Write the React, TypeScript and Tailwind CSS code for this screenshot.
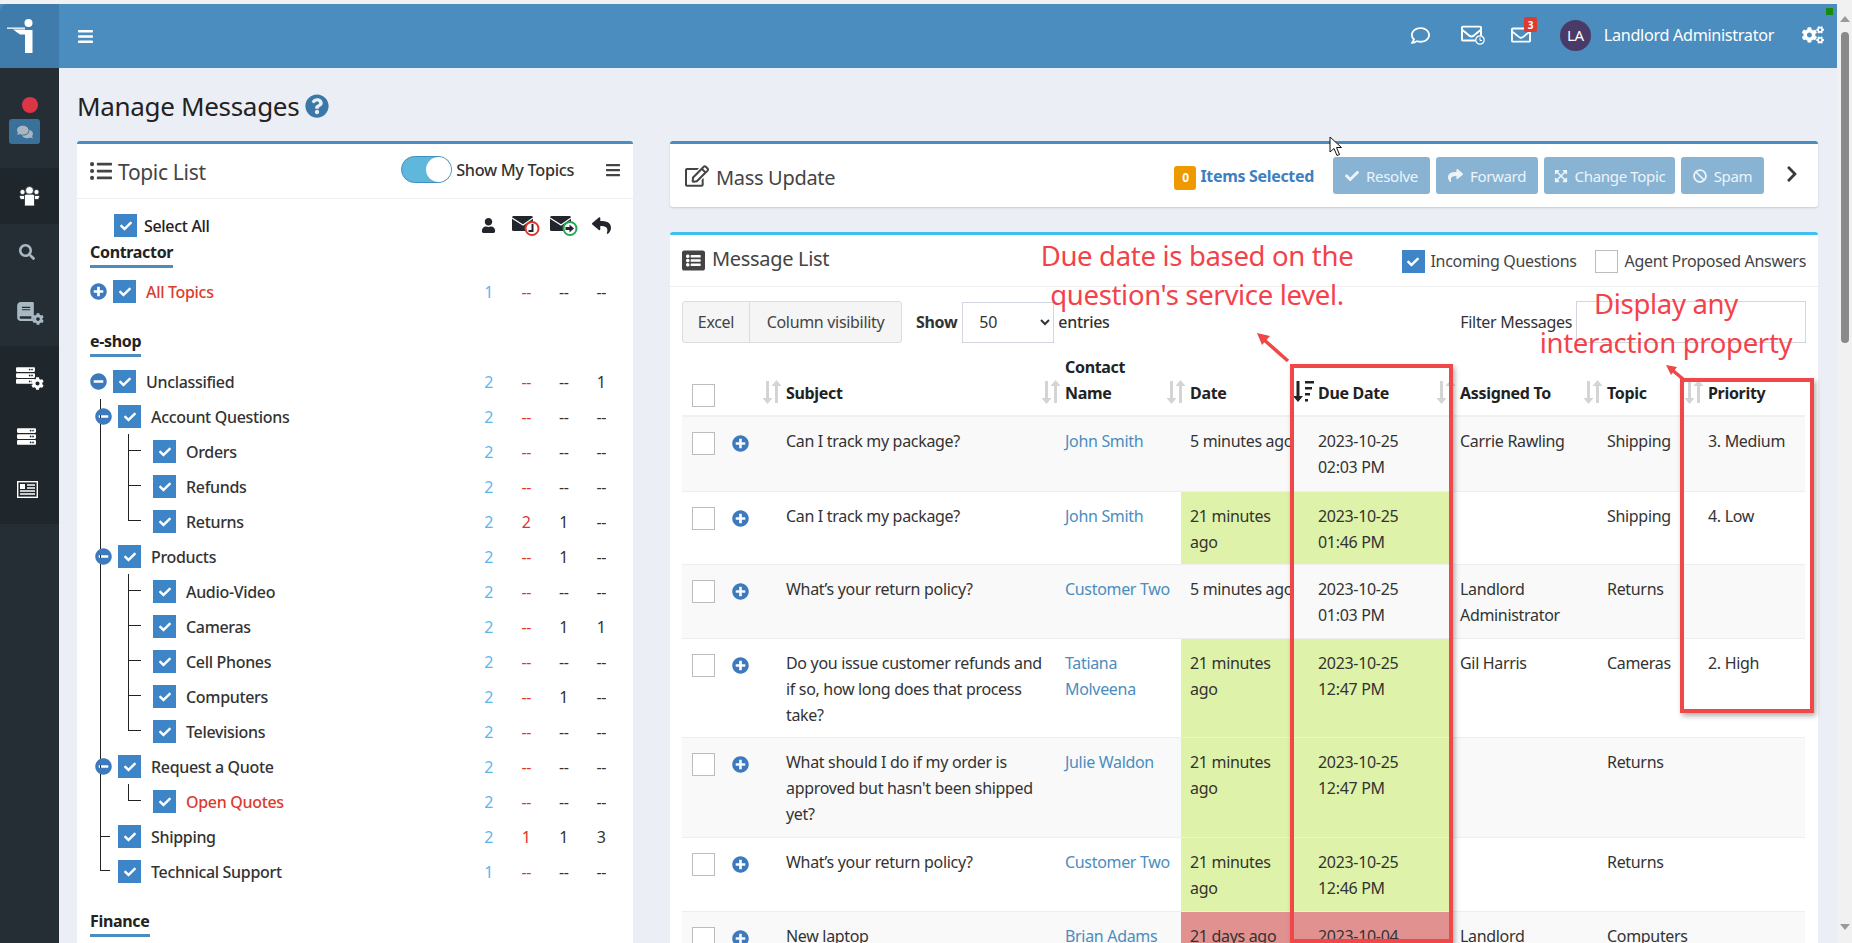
import {
  FaBan, FaBars, FaBook, FaCheck, FaChevronRight, FaCog, FaCogs, FaComments, FaExpandArrowsAlt,
  FaListAlt, FaListUl, FaMinusCircle, FaPlusCircle, FaQuestionCircle, FaRegComment, FaRegEdit,
  FaRegEnvelope, FaReply, FaSearch, FaServer, FaShare, FaUser,
} from "react-icons/fa"

type Num = string
type TreeRow = { label: string; pad: string; icon?: "plus" | "minus"; red?: boolean; nums: Num[] }

const treeRows: TreeRow[] = [
  { label: "Unclassified", pad: "pl-0", icon: "minus", nums: ["2", "--", "--", "1"] },
  { label: "Account Questions", pad: "pl-[5px]", icon: "minus", nums: ["2", "--", "--", "--"] },
  { label: "Orders", pad: "pl-[63px]", nums: ["2", "--", "--", "--"] },
  { label: "Refunds", pad: "pl-[63px]", nums: ["2", "--", "--", "--"] },
  { label: "Returns", pad: "pl-[63px]", nums: ["2", "2", "1", "--"] },
  { label: "Products", pad: "pl-[5px]", icon: "minus", nums: ["2", "--", "1", "--"] },
  { label: "Audio-Video", pad: "pl-[63px]", nums: ["2", "--", "--", "--"] },
  { label: "Cameras", pad: "pl-[63px]", nums: ["2", "--", "1", "1"] },
  { label: "Cell Phones", pad: "pl-[63px]", nums: ["2", "--", "--", "--"] },
  { label: "Computers", pad: "pl-[63px]", nums: ["2", "--", "1", "--"] },
  { label: "Televisions", pad: "pl-[63px]", nums: ["2", "--", "--", "--"] },
  { label: "Request a Quote", pad: "pl-[5px]", icon: "minus", nums: ["2", "--", "--", "--"] },
  { label: "Open Quotes", pad: "pl-[63px]", red: true, nums: ["2", "--", "--", "--"] },
  { label: "Shipping", pad: "pl-[28px]", nums: ["2", "1", "1", "3"] },
  { label: "Technical Support", pad: "pl-[28px]", nums: ["1", "--", "--", "--"] },
]

// tree connector lines: [left, top, width, height]
const treeLines = [
  [10, 35, 1, 471], [10, 472, 10, 1], [10, 506, 10, 1],
  [38, 70, 1, 86], [38, 86, 13, 1], [38, 121, 13, 1], [38, 156, 13, 1],
  [38, 210, 1, 156], [38, 226, 13, 1], [38, 261, 13, 1], [38, 296, 13, 1], [38, 331, 13, 1], [38, 366, 13, 1],
  [38, 420, 1, 16], [38, 436, 13, 1],
]

type Msg = {
  subject: string[]
  contact: string[]
  date: string[]
  due: string[]
  assigned?: string[]
  topic: string
  priority?: string
  tone?: "green" | "red"
  h: string
}

const messages: Msg[] = [
  { subject: ["Can I track my package?"], contact: ["John Smith"], date: ["5 minutes ago"], due: ["2023-10-25", "02:03 PM"], assigned: ["Carrie Rawling"], topic: "Shipping", priority: "3. Medium", h: "h-[75px]" },
  { subject: ["Can I track my package?"], contact: ["John Smith"], date: ["21 minutes", "ago"], due: ["2023-10-25", "01:46 PM"], topic: "Shipping", priority: "4. Low", tone: "green", h: "h-[73px]" },
  { subject: ["What’s your return policy?"], contact: ["Customer Two"], date: ["5 minutes ago"], due: ["2023-10-25", "01:03 PM"], assigned: ["Landlord", "Administrator"], topic: "Returns", h: "h-[74px]" },
  { subject: ["Do you issue customer refunds and", "if so, how long does that process", "take?"], contact: ["Tatiana", "Molveena"], date: ["21 minutes", "ago"], due: ["2023-10-25", "12:47 PM"], assigned: ["Gil Harris"], topic: "Cameras", priority: "2. High", tone: "green", h: "h-[99px]" },
  { subject: ["What should I do if my order is", "approved but hasn't been shipped", "yet?"], contact: ["Julie Waldon"], date: ["21 minutes", "ago"], due: ["2023-10-25", "12:47 PM"], topic: "Returns", tone: "green", h: "h-[100px]" },
  { subject: ["What’s your return policy?"], contact: ["Customer Two"], date: ["21 minutes", "ago"], due: ["2023-10-25", "12:46 PM"], topic: "Returns", tone: "green", h: "h-[74px]" },
  { subject: ["New laptop"], contact: ["Brian Adams"], date: ["21 days ago"], due: ["2023-10-04", "10:12 AM"], assigned: ["Landlord", "Administrator"], topic: "Computers", tone: "red", h: "h-[74px]" },
]

function Box({ checked }: { checked?: boolean }) {
  if (checked) {
    return (
      <span className="flex h-[23px] w-[23px] shrink-0 items-center justify-center bg-[#3d85c6]">
        <FaCheck className="text-white" size={12} />
      </span>
    )
  }
  return <span className="block h-[23px] w-[23px] shrink-0 border border-[#bcbcbc] bg-white" />
}

function Lines({ lines }: { lines: string[] }) {
  return (
    <>
      {lines.map((l) => (
        <div key={l} className="whitespace-nowrap">{l}</div>
      ))}
    </>
  )
}

function SortIcon() {
  return (
    <svg width="20" height="24" viewBox="0 0 20 24" className="text-[#d4d4d4]" fill="currentColor">
      <path d="M4 1h3v17h3.500L5.500 24 .5 18H4z" />
      <path d="M13 23h3V6h3.500L14.500 0 9.500 6H13z" />
    </svg>
  )
}

function Th({ children, sort, sortDark }: { children?: React.ReactNode; sort?: boolean; sortDark?: boolean }) {
  return (
    <th className="relative pb-[9px] pl-[9px] text-left align-bottom font-bold leading-[26px] text-[#222]">
      {sort && (
        <span className="absolute bottom-[11px] left-[-15px]">
          <SortIcon />
        </span>
      )}
      {sortDark && (
        <span className="absolute bottom-[13px] left-[-16px]">
          <svg width="22" height="22" viewBox="0 0 22 22" className="text-[#222]" fill="currentColor">
            <path d="M3.500 1h3v15H10l-5 6-5-6h3.500z" />
            <path d="M12 1h9v2.500h-9zM12 7h7v2.500h-7zM12 13h5v2.500h-5zM12 19h3v2.500h-3z" />
          </svg>
        </span>
      )}
      {children}
    </th>
  )
}

function Logo() {
  return (
    <svg width="59" height="63" viewBox="0 0 59 63" fill="white">
      <circle cx="28.500" cy="18" r="4" />
      <path d="M25 25h7.500v23H25z" />
      <path d="M7 22.500h18v1.300H7z" />
      <path d="M13 24.500h12v5h-5z" />
    </svg>
  )
}

function UsersIcon() {
  return (
    <svg width="21" height="20" viewBox="0 0 21 20" fill="white" stroke="#1f272d" strokeWidth=".8">
      <circle cx="3.500" cy="6" r="2.600" />
      <circle cx="17.500" cy="6" r="2.600" />
      <path d="M0 9.500h7v4H1.500z" />
      <path d="M14 9.500h7l-1.500 4H14z" />
      <circle cx="10.500" cy="4.500" r="4" />
      <path d="M5.500 10c0-1 1-1.800 2-1.800h6c1 0 2 .8 2 1.800v9c0 .5-.4 1-1 1h-8c-.6 0-1-.5-1-1z" />
    </svg>
  )
}

function TopicRow({ row }: { row: TreeRow }) {
  return (
    <div className="flex h-[35px] items-center">
      <div className={`relative z-10 flex flex-1 items-center ${row.pad}`}>
        {row.icon === "plus" && <FaPlusCircle className="mr-[6px] text-[#3d79bd]" size={17} />}
        {row.icon === "minus" && <FaMinusCircle className="mr-[6px] text-[#3d79bd]" size={17} />}
        <Box checked />
        <span className={`ml-[10px] font-medium ${row.red ? "text-[#dc3b2f]" : "text-[#333]"}`}>{row.label}</span>
      </div>
      <Nums values={row.nums} />
    </div>
  )
}

function Nums({ values }: { values: Num[] }) {
  return (
    <div className="flex pr-[13px]">
      <span className="w-[37.500px] text-center text-[#5cb6ea]">{values[0]}</span>
      <span className="w-[37.500px] text-center text-[#e0342b]">{values[1]}</span>
      <span className="w-[37.500px] text-center text-[#333]">{values[2]}</span>
      <span className="w-[37.500px] text-center text-[#333]">{values[3]}</span>
    </div>
  )
}

function Section({ title, className }: { title: string; className: string }) {
  return (
    <div className={`w-fit border-b-[3px] border-[#4a8dbe] pb-[3px] font-bold leading-[20px] text-[#222] ${className}`}>{title}</div>
  )
}

function MailBadgeIcon({ color, arrow }: { color: string; arrow?: boolean }) {
  return (
    <svg width="28" height="20" viewBox="0 0 28 20">
      <rect x="0" y="0" width="21" height="15" rx="1.500" fill="#22262c" />
      <path d="M0 2l11 7 10-7" fill="none" stroke="white" strokeWidth="1.200" />
      <circle cx="20" cy="12.500" r="6.500" fill="white" stroke={color} strokeWidth="2" />
      {arrow ? (
        <path d="M15.500 11h4V8.500l4.500 4-4.500 4V14h-4z" fill="#22262c" />
      ) : (
        <path d="M19.500 8v6h-3v2h5V8z" fill="#22262c" />
      )}
    </svg>
  )
}

function ActionButton({ icon, label, className }: { icon: React.ReactNode; label: string; className: string }) {
  return (
    <button className={`flex h-[37px] items-center justify-center gap-[7px] rounded-[3px] bg-[#88b3d3] text-[15px] text-white/85 ${className}`}>
      {icon}
      {label}
    </button>
  )
}

function SideSection({ dark, className, children }: { dark?: boolean; className: string; children: React.ReactNode }) {
  return <div className={`flex flex-col items-center ${dark ? "bg-[#1f272d]" : "bg-[#252e35]"} ${className}`}>{children}</div>
}

function NewsIcon() {
  return (
    <svg width="21" height="17" viewBox="0 0 21 17" className="-translate-x-[2px]">
      <rect x=".7" y=".7" width="19.600" height="15.600" fill="#1f272d" stroke="white" strokeWidth="1.400" />
      <rect x="3" y="3" width="5" height="5" fill="white" />
      <path d="M10 4h8M10 7h8M3 10h15M3 13h15" stroke="white" strokeWidth="1.400" />
    </svg>
  )
}

function Sidebar() {
  return (
    <aside className="flex w-[59px] shrink-0 flex-col bg-[#252e35]">
      <SideSection className="h-[100px] pt-[29px]">
        <span className="h-[16px] w-[16px] rounded-full bg-[#dc3545]" />
        <span className="mt-[6px] flex h-[25px] w-[31px] -translate-x-[5px] items-center justify-center rounded-[3px] bg-[#39719b]">
          <FaComments className="text-[#a9b6bf]" size={16} />
        </span>
      </SideSection>
      <SideSection dark className="h-[56px] pt-[18px]">
        <UsersIcon />
      </SideSection>
      <SideSection className="h-[122px] pt-[20px]">
        <FaSearch className="-translate-x-[3px] text-[#a9b9c4]" size={16} />
        <span className="relative mt-[42px] block h-[20px] w-[28px]">
          <FaBook className="text-[#a9b9c4]" size={19} />
          <FaCog className="absolute bottom-[-3px] right-0 text-[#a9b9c4]" size={12} />
        </span>
      </SideSection>
      <SideSection dark className="h-[178px] pt-[20px]">
        <span className="relative block h-[20px] w-[28px]">
          <FaServer className="text-white" size={19} />
          <FaCog className="absolute bottom-[-4px] right-0 text-white" size={13} />
        </span>
        <FaServer className="mt-[41px] -translate-x-[3px] text-white" size={19} />
        <span className="mt-[35px] block"><NewsIcon /></span>
      </SideSection>
    </aside>
  )
}

function TopicPanel() {
  return (
    <section className="w-[556px] shrink-0 rounded-t-[3px] border-t-[3px] border-[#4a8dbe] bg-white">
      <div className="flex h-[55px] items-center border-b border-[#eeeeee] pl-[13px] pr-[12px]">
        <FaListUl className="text-[#444]" size={22} />
        <span className="ml-[6px] pt-[3px] text-[21px] leading-none text-[#444]">Topic List</span>
        <div className="ml-auto flex items-center pb-[3px]">
          <span className="flex h-[27px] w-[51px] justify-end rounded-full border border-[#3e8ec0] bg-[#5fb8dc]">
            <span className="h-[25px] w-[25px] rounded-full bg-white" />
          </span>
          <span className="ml-[4px] text-[16.300px] font-medium text-[#333]">Show My Topics</span>
          <FaBars className="ml-[31px] text-[#444]" size={16} />
        </div>
      </div>
      <div className="pl-[13px] pt-[11px]">
        <div className="flex h-[31px] items-center">
          <div className="flex flex-1 items-center pl-[24px]">
            <Box checked />
            <span className="ml-[7px] font-medium text-[#222]">Select All</span>
          </div>
          <div className="flex items-center pr-[13px]">
            <span className="flex w-[37.500px] justify-center"><FaUser className="text-[#22262c]" size={15} /></span>
            <span className="flex w-[37.500px] justify-center"><MailBadgeIcon color="#e0342b" /></span>
            <span className="flex w-[37.500px] justify-center"><MailBadgeIcon color="#22a855" arrow /></span>
            <span className="flex w-[37.500px] justify-center"><FaReply className="text-[#22262c]" size={19} /></span>
          </div>
        </div>
        <Section title="Contractor" className="mt-[1px]" />
        <div className="mt-[6px] flex h-[35px] items-center">
          <div className="flex flex-1 items-center">
            <FaPlusCircle className="mr-[6px] text-[#3d79bd]" size={17} />
            <Box checked />
            <span className="ml-[10px] font-medium text-[#dc3b2f]">All Topics</span>
          </div>
          <Nums values={["1", "--", "--", "--"]} />
        </div>
        <Section title="e-shop" className="mt-[22px]" />
        <div className="relative mt-[7px]">
          {treeLines.map(([left, top, width, height], i) => (
            <span key={i} className="absolute bg-[#222]" style={{ left, top, width, height }} />
          ))}
          {treeRows.map((row) => (
            <TopicRow key={row.label} row={row} />
          ))}
        </div>
        <Section title="Finance" className="mt-[22px]" />
      </div>
    </section>
  )
}

function MassUpdate() {
  return (
    <section className="flex h-[66px] shrink-0 items-center rounded-[3px] border-t-[3px] border-[#4a8dbe] bg-white shadow-[0_1px_2px_rgba(0,0,0,0.15)]">
      <FaRegEdit className="ml-[15px] text-[#444]" size={24} />
      <span className="ml-[7px] pt-[4px] text-[20px] text-[#444]">Mass Update</span>
      <div className="ml-auto flex items-center gap-[6px]">
        <span className="mr-[-2px] mt-[5px] flex h-[24px] w-[22px] items-center justify-center rounded-[3px] bg-[#ee9900] text-[12px] font-bold text-white">0</span>
        <span className="mr-[13px] font-bold text-[#3f7fbf]">Items Selected</span>
        <ActionButton className="w-[97px]" icon={<FaCheck size={14} />} label="Resolve" />
        <ActionButton className="w-[102px]" icon={<FaShare size={15} />} label="Forward" />
        <ActionButton className="w-[131px]" icon={<FaExpandArrowsAlt size={14} />} label="Change Topic" />
        <ActionButton className="w-[83px]" icon={<FaBan size={14} />} label="Spam" />
        <FaChevronRight className="mb-[4px] ml-[13px] mr-[17px] text-[#3a3a3a]" size={18} />
      </div>
    </section>
  )
}

function MessageRow({ msg, index }: { msg: Msg; index: number }) {
  const stripe = index % 2 === 0 ? "bg-[#f9f9f9]" : "bg-white"
  const tone = msg.tone === "green" ? "bg-[#def2a9]" : msg.tone === "red" ? "bg-[#e29191]" : ""
  const cell = "border-b border-[#eeeeee] pb-[9px] pl-[9px] pt-[11px] align-top"
  return (
    <tr className={`${stripe} ${msg.h}`}>
      <td className="border-b border-[#eeeeee] pl-[10px] pt-[15px] align-top"><Box /></td>
      <td className="border-b border-[#eeeeee] pl-[8px] pt-[18px] align-top"><FaPlusCircle className="text-[#3d79bd]" size={17} /></td>
      <td className={cell}><Lines lines={msg.subject} /></td>
      <td className={`${cell} text-[#4a8dbe]`}><Lines lines={msg.contact} /></td>
      <td className={`${cell} ${tone}`}><Lines lines={msg.date} /></td>
      <td className={`${cell} ${tone}`}><Lines lines={msg.due} /></td>
      <td className={cell}>{msg.assigned && <Lines lines={msg.assigned} />}</td>
      <td className={cell}>{msg.topic}</td>
      <td className={cell}>{msg.priority}</td>
    </tr>
  )
}

function MessagePanel() {
  return (
    <section className="mt-[25px] flex-1 rounded-t-[3px] border-t-[3px] border-[#3fc0ee] bg-white">
      <div className="flex h-[52px] items-center border-b border-[#eeeeee] pl-[12px] pr-[12px]">
        <FaListAlt className="text-[#444]" size={23} />
        <span className="mb-[3px] ml-[7px] text-[20px] text-[#444]">Message List</span>
        <div className="ml-auto flex items-center pt-[2px]">
          <Box checked />
          <span className="mb-[2px] ml-[6px] text-[#444]">Incoming Questions</span>
          <span className="ml-[18px]"><Box /></span>
          <span className="mb-[2px] ml-[7px] text-[#444]">Agent Proposed Answers</span>
        </div>
      </div>
      <div className="px-[12px] pt-[14px]">
        <div className="flex h-[42px] items-center">
          <div className="flex h-[42px] w-[220px] rounded-[3px] border border-[#dddddd] bg-[#f5f5f5] text-[#444]">
            <span className="flex w-[67px] items-center justify-center border-r border-[#dddddd]">Excel</span>
            <span className="flex flex-1 items-center justify-center">Column visibility</span>
          </div>
          <span className="ml-[14px] font-bold text-[#333]">Show</span>
          <select defaultValue="50" className="ml-[5px] h-[41px] w-[92px] border border-[#d2d6de] bg-white pl-[12px] text-[#333]">
            <option>50</option>
          </select>
          <span className="ml-[4px] font-medium text-[#333]">entries</span>
          <span className="ml-auto text-[#333]">Filter Messages</span>
          <input className="ml-[4px] h-[42px] w-[230px] border border-[#d2d6de] bg-white" />
        </div>
        <table className="w-[1123px] table-fixed border-collapse">
          <colgroup>
            <col className="w-[42px]" />
            <col className="w-[53px]" />
            <col className="w-[279px]" />
            <col className="w-[125px]" />
            <col className="w-[128px]" />
            <col className="w-[142px]" />
            <col className="w-[147px]" />
            <col className="w-[101px]" />
            <col className="w-[106px]" />
          </colgroup>
          <thead>
            <tr className="h-[73px] border-b-2 border-[#f0f0f0]">
              <th className="pb-[8px] pl-[10px] align-bottom"><Box /></th>
              <th />
              <Th sort>Subject</Th>
              <Th sort>Contact<br />Name</Th>
              <Th sort>Date</Th>
              <Th sortDark>Due Date</Th>
              <Th sort>Assigned To</Th>
              <Th sort>Topic</Th>
              <Th sort>Priority</Th>
            </tr>
          </thead>
          <tbody>
            {messages.map((msg, i) => (
              <MessageRow key={i} msg={msg} index={i} />
            ))}
          </tbody>
        </table>
      </div>
    </section>
  )
}

function Annotations() {
  return (
    <>
      <div className="absolute left-[1037px] top-[236px] w-[320px] text-center text-[27.500px] leading-[39px] text-[#f4424a]">
        Due date is based on the<br />question's service level.
      </div>
      <div className="absolute left-[1526px] top-[284px] w-[280px] text-center text-[27.500px] leading-[39px] text-[#f4424a]">
        Display any<br />interaction property
      </div>
      <div className="absolute left-[1290px] top-[364px] h-[579px] w-[163px] border-[4px] border-[#f04848] shadow-[2px_3px_5px_rgba(0,0,0,0.3)]" />
      <div className="absolute left-[1680px] top-[378px] h-[335px] w-[134px] border-[4px] border-[#f04848] shadow-[2px_3px_5px_rgba(0,0,0,0.3)]" />
      <svg className="absolute left-[1250px] top-[325px]" width="45" height="45" viewBox="0 0 45 45">
        <path d="M38 36L12 13" stroke="#f04848" strokeWidth="3.500" />
        <path d="M7 8l13 3-8 9z" fill="#f04848" />
      </svg>
      <svg className="absolute left-[1660px] top-[360px]" width="28" height="24" viewBox="0 0 28 24">
        <path d="M23 19L11 9" stroke="#f04848" strokeWidth="3.500" />
        <path d="M6 5l11 2-6 8z" fill="#f04848" />
      </svg>
      <svg className="absolute left-[1329px] top-[136px]" width="14" height="21" viewBox="0 0 14 21">
        <path d="M1 1v15l4-3.500 3 7 2.500-1-3-7H12.500z" fill="white" stroke="#111" strokeWidth="1" />
      </svg>
      <span className="absolute left-[1826px] top-[8px] h-[7px] w-[7px] bg-[#178a12]" />
    </>
  )
}

export default function App() {
  return (
    <div className="relative flex h-[943px] w-[1852px] overflow-hidden bg-[#f1f1f1] font-['Noto_Sans',sans-serif] text-[16px] leading-[26px] tracking-[-0.02em] text-[#333]">
      <div className="flex w-[1837px] flex-col pt-[4px]">
        <header className="flex h-[64px] shrink-0 items-center bg-[#4a8dbe] text-white">
          <div className="flex h-full w-[59px] items-center justify-center rounded-tl-[8px] bg-[#3f7cab]">
            <Logo />
          </div>
          <FaBars className="ml-[18px]" size={17} />
          <div className="ml-auto flex items-center pb-[2px]">
            <FaRegComment size={19} />
            <span className="relative ml-[31px] block h-[17px] w-[22px] -translate-y-[2px]">
              <FaRegEnvelope size={21} className="-mt-[2px]" />
              <svg className="absolute bottom-[-3px] right-[-2px]" width="10" height="10" viewBox="0 0 10 10">
                <circle cx="5" cy="5" r="4.200" fill="#4a8dbe" stroke="white" strokeWidth="1.200" />
                <path d="M5 2.500V5.500H7" fill="none" stroke="white" strokeWidth="1" />
              </svg>
            </span>
            <span className="relative ml-[28px] block">
              <FaRegEnvelope size={20} />
              <span className="absolute right-[-6px] top-[-8px] flex h-[15px] w-[13px] items-center justify-center rounded-[2px] bg-[#dd3b2f] text-[10px] font-bold leading-none">3</span>
            </span>
            <span className="ml-[29px] flex h-[31px] w-[31px] items-center justify-center rounded-full bg-[#4a3a68] text-[15px]">LA</span>
            <span className="ml-[13px] text-[16.200px]">Landlord Administrator</span>
            <FaCogs className="ml-[28px] mr-[13px]" size={22} />
          </div>
        </header>
        <div className="flex min-h-0 flex-1">
          <Sidebar />
          <main className="flex min-w-0 flex-1 flex-col bg-[#ebeef4] pl-[18px] pr-[19px]">
            <h1 className="flex h-[73px] shrink-0 items-center gap-[6px] pt-[3px] text-[26px] text-[#222]">
              Manage Messages
              <FaQuestionCircle className="text-[#3a78a8]" size={24} />
            </h1>
            <div className="flex min-h-0 flex-1 gap-[37px]">
              <TopicPanel />
              <div className="flex min-w-0 flex-1 flex-col">
                <MassUpdate />
                <MessagePanel />
              </div>
            </div>
          </main>
        </div>
      </div>
      <div className="relative w-[15px] bg-[#f1f1f1]">
        <span className="absolute left-[4px] top-[32px] h-[311px] w-[8px] rounded-full bg-[#8a8a8a]" />
        <span className="absolute left-[3px] top-[16px] h-0 w-0 border-x-[5px] border-b-[6px] border-x-transparent border-b-[#9a9a9a]" />
        <span className="absolute left-[3px] top-[924px] h-0 w-0 border-x-[5px] border-t-[6px] border-x-transparent border-t-[#9a9a9a]" />
      </div>
      <Annotations />
    </div>
  )
}
